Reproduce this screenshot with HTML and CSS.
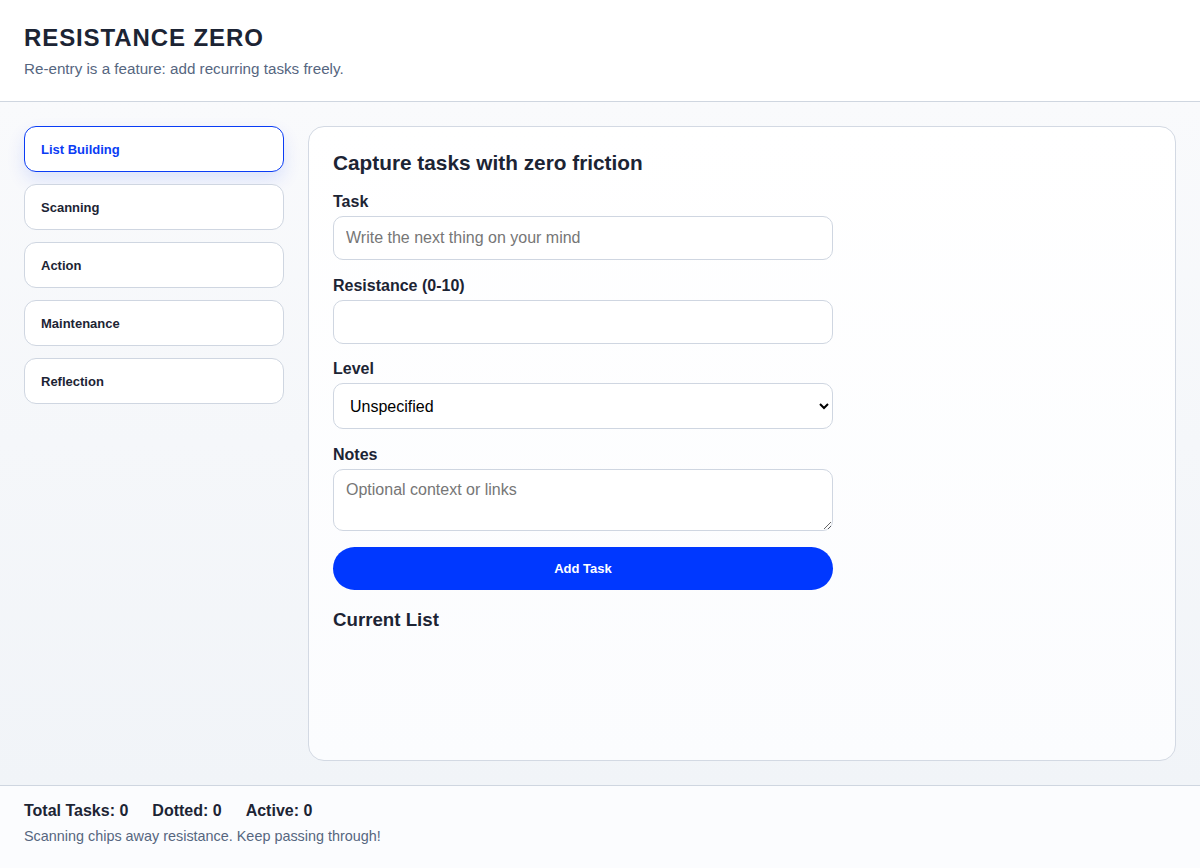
FILE: index.html
```html
<!DOCTYPE html>
<html lang="en">
<head>
<meta charset="utf-8">
<title>Resistance Zero</title>
<link rel="stylesheet" href="styles.css">
</head>
<body>
<header class="top">
  <h1 class="brand">RESISTANCE ZERO</h1>
  <p class="tagline">Re-entry is a feature: add recurring tasks freely.</p>
</header>
<main class="layout">
  <nav class="phases">
    <button class="phase active">List Building</button>
    <button class="phase">Scanning</button>
    <button class="phase">Action</button>
    <button class="phase">Maintenance</button>
    <button class="phase">Reflection</button>
  </nav>
  <section class="card">
    <h2 class="card-title">Capture tasks with zero friction</h2>
    <form class="form">
      <div class="field">
        <label class="label" for="task">Task</label>
        <input class="control" id="task" type="text" placeholder="Write the next thing on your mind">
      </div>
      <div class="field">
        <label class="label" for="res">Resistance (0-10)</label>
        <input class="control" id="res" type="number" min="0" max="10">
      </div>
      <div class="field">
        <label class="label" for="level">Level</label>
        <select class="control select" id="level">
          <option>Unspecified</option>
        </select>
      </div>
      <div class="field">
        <label class="label" for="notes">Notes</label>
        <textarea class="control area" id="notes" placeholder="Optional context or links"></textarea>
      </div>
      <button class="add" type="button">Add Task</button>
    </form>
    <h3 class="list-title">Current List</h3>
  </section>
</main>
<footer class="foot">
  <div class="stats">
    <span>Total Tasks: 0</span>
    <span>Dotted: 0</span>
    <span>Active: 0</span>
  </div>
  <p class="foot-note">Scanning chips away resistance. Keep passing through!</p>
</footer>
</body>
</html>
```
FILE: styles.css
```css
* { box-sizing: border-box; }
html, body { height: 100%; }
body {
  margin: 0;
  font-family: "Liberation Sans", Arial, Helvetica, sans-serif;
  color: #1c2434;
  display: flex;
  flex-direction: column;
  background: #ffffff;
}
.top {
  background: #ffffff;
  padding: 24px 24px 24px;
  border-bottom: 1px solid #cfd6e0;
}
.brand {
  margin: 0 0 8px;
  font-size: 24px;
  line-height: 28px;
  letter-spacing: 0.9px;
  font-weight: 700;
  color: #1c2434;
}
.tagline {
  margin: 0;
  font-size: 15.2px;
  line-height: 17px;
  color: #56667f;
}
.layout {
  flex: 1;
  display: flex;
  gap: 24px;
  padding: 24px;
  background: linear-gradient(180deg, #f9fafc 0%, #f1f4f8 100%);
  min-height: 0;
}
.phases {
  width: 260px;
  flex-shrink: 0;
  display: flex;
  flex-direction: column;
  gap: 12px;
}
.phase {
  height: 46px;
  text-align: left;
  padding: 0 16px;
  background: #ffffff;
  border: 1px solid #cfd6e1;
  border-radius: 12px;
  font-family: inherit;
  font-size: 13px;
  font-weight: 700;
  color: #1c2434;
}
.phase.active {
  border-color: #0a3cf5;
  color: #0a3cf5;
  box-shadow: 0 8px 18px rgba(10, 60, 245, 0.12);
}
.card {
  flex: 1;
  border: 1px solid #d3d9e3;
  border-radius: 16px;
  padding: 24px;
  background: linear-gradient(180deg, #ffffff 0%, #fbfcfe 100%);
}
.card-title {
  margin: 0 0 17px;
  font-size: 20.8px;
  line-height: 24px;
  font-weight: 700;
}
.form {
  width: 500px;
  display: flex;
  flex-direction: column;
  gap: 15.5px;
}
.field {
  display: flex;
  flex-direction: column;
  gap: 5px;
}
.label {
  font-size: 16px;
  line-height: 19px;
  font-weight: 700;
  color: #1c2434;
}
.control {
  height: 44px;
  border: 1px solid #cfd6e1;
  border-radius: 10px;
  padding: 0 12px;
  font-family: inherit;
  font-size: 16px;
  color: #111;
  background: #ffffff;
}
.control::placeholder { color: #767676; }
.select {
  height: 46px;
  padding: 0 12px;
  color: #000;
}
.area {
  height: 62px;
  padding: 11px 12px;
  resize: vertical;
}
.add {
  margin-top: 0.5px;
  height: 43px;
  border: none;
  border-radius: 22px;
  background: #0038ff;
  color: #ffffff;
  font-family: inherit;
  font-size: 13px;
  font-weight: 700;
}
.list-title {
  margin: 19px 0 0;
  font-size: 18.7px;
  line-height: 22px;
  font-weight: 700;
}
.foot {
  border-top: 1px solid #cfd6e0;
  background: #fbfcfe;
  padding: 15px 24px 23px;
}
.stats {
  display: flex;
  gap: 24px;
  font-size: 16px;
  line-height: 19px;
  font-weight: 700;
}
.foot-note {
  margin: 8px 0 0;
  font-size: 14.4px;
  line-height: 17px;
  color: #56667f;
}
```
